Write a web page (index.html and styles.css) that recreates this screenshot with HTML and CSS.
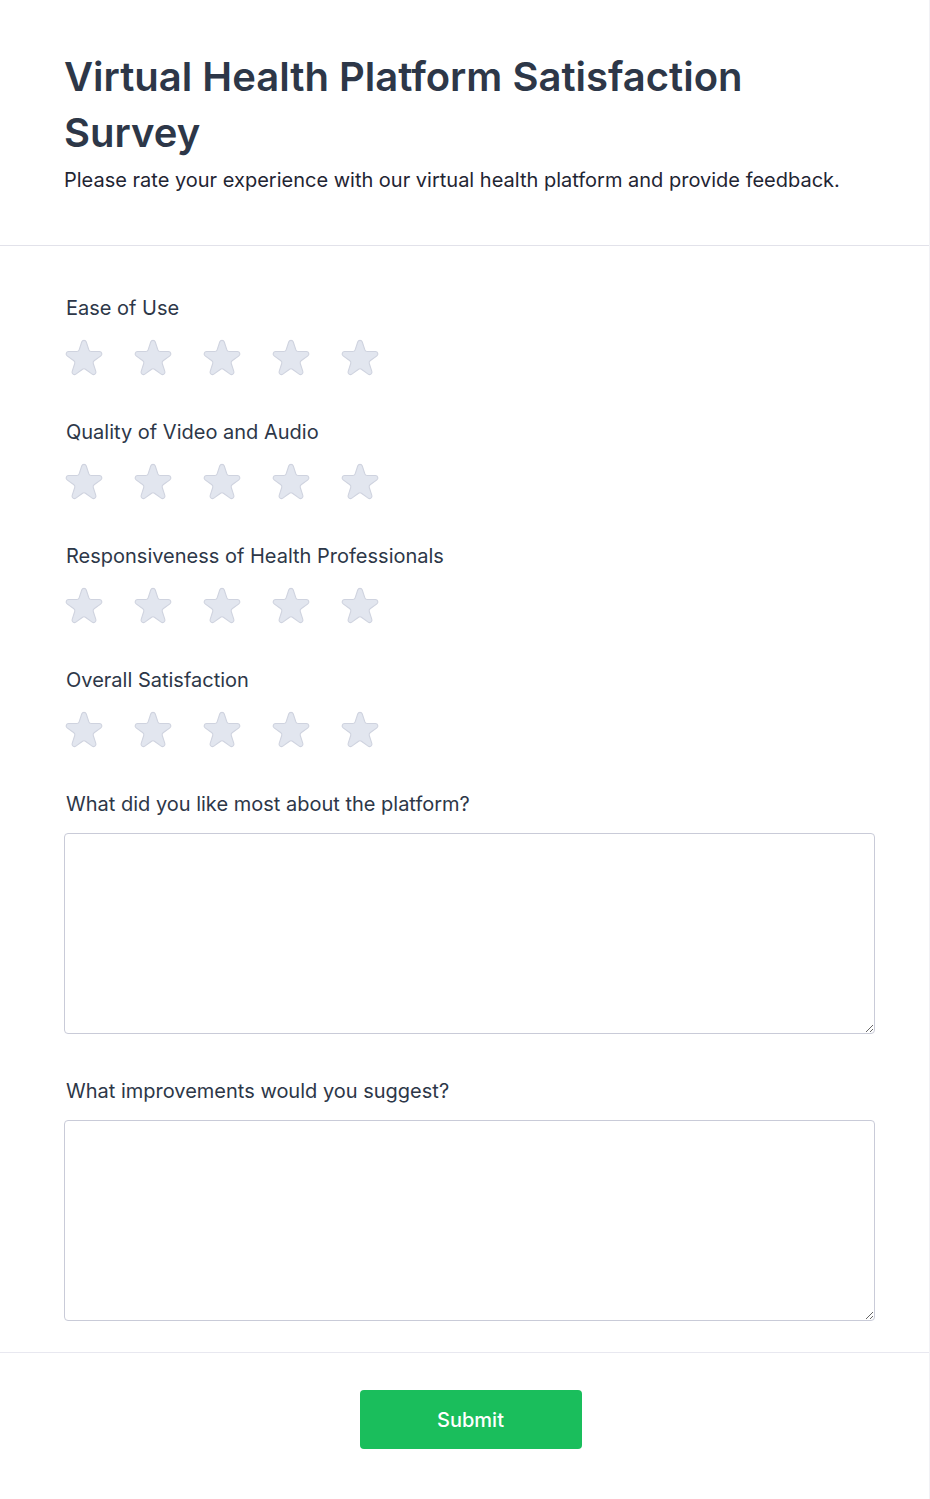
FILE: index.html
```
<!DOCTYPE html>
<html lang="en">
<head>
    <meta charset="UTF-8">
    <meta name="viewport" content="width=device-width, initial-scale=1.0">
    <title>Virtual Health Platform Satisfaction Survey</title>
    <link rel="stylesheet" href="styles.css">
</head>
<body>
    <div class="survey">
        <div class="survey-header">
            <h1 class="survey-title">Virtual Health Platform Satisfaction Survey</h1>
            <p class="survey-subtitle">Please rate your experience with our virtual health platform and provide feedback.</p>
        </div>
        <form class="survey-form">
            <div class="question">
                <label class="question-label">Ease of Use</label>
                <div class="rating" data-name="ease"></div>
            </div>
            <div class="question">
                <label class="question-label">Quality of Video and Audio</label>
                <div class="rating" data-name="quality"></div>
            </div>
            <div class="question">
                <label class="question-label">Responsiveness of Health Professionals</label>
                <div class="rating" data-name="responsiveness"></div>
            </div>
            <div class="question">
                <label class="question-label">Overall Satisfaction</label>
                <div class="rating" data-name="overall"></div>
            </div>
            <div class="question question-text">
                <label class="question-label" for="liked">What did you like most about the platform?</label>
                <textarea class="question-input" id="liked"></textarea>
            </div>
            <div class="question question-text">
                <label class="question-label" for="improvements">What improvements would you suggest?</label>
                <textarea class="question-input" id="improvements"></textarea>
            </div>
        </form>
        <div class="survey-footer">
            <button class="submit-button" type="button">Submit</button>
        </div>
    </div>
    <script>
        document.addEventListener('DOMContentLoaded', () => {
            const starPath = 'M9.049 2.927c.3-.921 1.603-.921 1.902 0l1.07 3.292a1 1 0 00.95.69h3.462c.969 0 1.371 1.24.588 1.81l-2.8 2.034a1 1 0 00-.364 1.118l1.07 3.292c.3.921-.755 1.688-1.54 1.118l-2.8-2.034a1 1 0 00-1.175 0l-2.8 2.034c-.784.57-1.838-.197-1.539-1.118l1.07-3.292a1 1 0 00-.364-1.118L2.98 8.72c-.783-.57-.38-1.81.588-1.81h3.461a1 1 0 00.951-.69l1.07-3.292z';

            document.querySelectorAll('.rating').forEach((rating) => {
                for (let i = 1; i <= 5; i++) {
                    const star = document.createElement('button');
                    star.type = 'button';
                    star.className = 'star';
                    star.dataset.value = i;
                    star.innerHTML = `<svg viewBox="0 0 20 20" width="48" height="48"><path d="${starPath}"/></svg>`;
                    rating.appendChild(star);
                }

                rating.addEventListener('click', (e) => {
                    const star = e.target.closest('.star');
                    if (!star) return;
                    const value = Number(star.dataset.value);
                    rating.querySelectorAll('.star').forEach((s) => {
                        s.classList.toggle('star-active', Number(s.dataset.value) <= value);
                    });
                });
            });
        });
    </script>
</body>
</html>
```

FILE: styles.css
```
body {
    margin: 0;
    font-family: 'Inter', 'Noto Sans', sans-serif;
    background-color: #fff;
    color: #2d3748;
}

.survey {
    width: 929px;
    min-height: 1499px;
    box-shadow: 1px 0 0 #f1f1f5;
}

.survey-header {
    padding: 49px 64px 51px;
    border-bottom: 1px solid #e2e2ea;
}

.survey-title {
    margin: 0;
    font-size: 40px;
    line-height: 56px;
    font-weight: 600;
    color: #2d3748;
}

.survey-subtitle {
    margin: 5px 0 0;
    font-size: 20px;
    line-height: 28px;
    color: #1f2533;
}

.survey-form {
    padding: 48px 54px 31px 64px;
    border-bottom: 1px solid #e8e8f0;
}

.question {
    display: flex;
    flex-direction: column;
    margin-bottom: 35px;
}

.question-label {
    padding-left: 2px;
    font-size: 20px;
    line-height: 28px;
    color: #2d3748;
}

.rating {
    display: flex;
    gap: 21px;
    margin: 13px 0 0 -4px;
}

.star {
    padding: 0;
    border: none;
    background: none;
    cursor: pointer;
    display: flex;
}

.star path {
    fill: #e2e6ef;
    stroke: #cfd3df;
    stroke-width: 0.45;
}

.star-active path {
    fill: #facc15;
    stroke: #eab308;
}

.question-text {
    margin-bottom: 43px;
}

.question-text:last-child {
    margin-bottom: 0;
}

.question-input {
    margin-top: 15px;
    height: 201px;
    box-sizing: border-box;
    border: 1px solid #c9cbd8;
    border-radius: 4px;
    padding: 10px 12px;
    font-family: inherit;
    font-size: 16px;
    resize: vertical;
}

.survey-footer {
    display: flex;
    justify-content: center;
    padding: 37px 52px 50px 64px;
}

.submit-button {
    width: 222px;
    height: 59px;
    border: none;
    border-radius: 4px;
    background-color: #1abe5c;
    color: #fff;
    font-family: inherit;
    font-size: 20px;
    font-weight: 500;
    cursor: pointer;
}
```
